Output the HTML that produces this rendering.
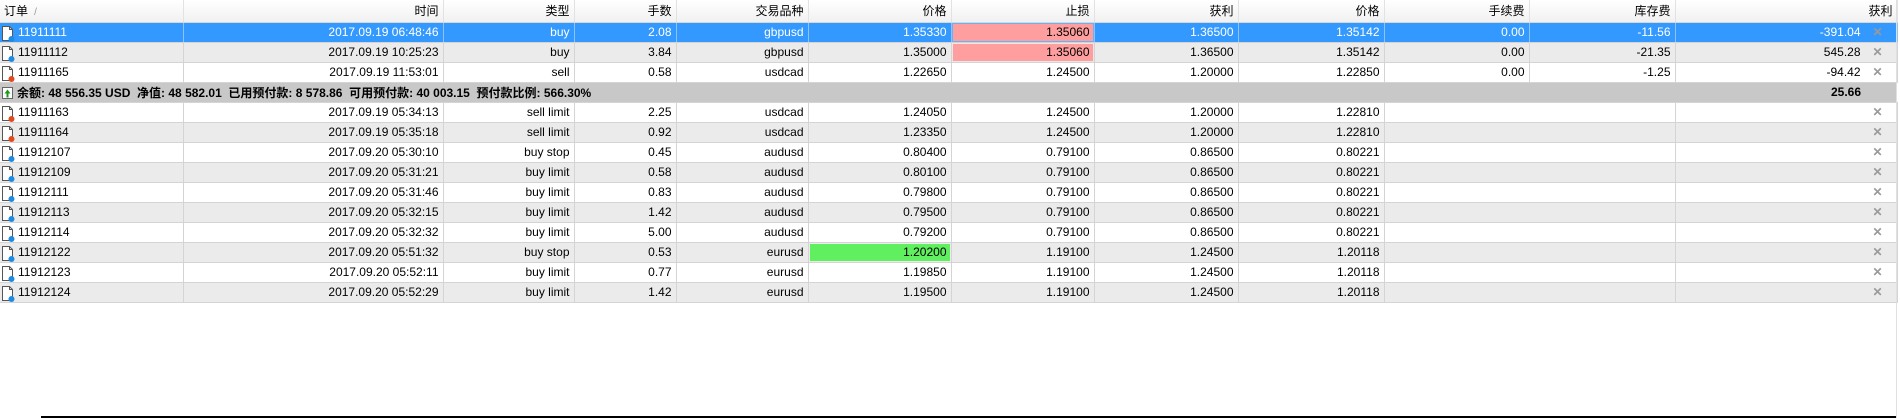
<!DOCTYPE html>
<html><head><meta charset="utf-8"><style>
body{margin:0;width:1900px;height:418px;background:#fff;overflow:hidden;position:relative;font-family:"Liberation Sans","Noto Sans CJK SC",sans-serif;font-size:12px;color:#000}
table{border-collapse:collapse;table-layout:fixed;width:1897px;position:absolute;left:0;top:0}
td,th{height:20px;padding:0 4px;border-bottom:1px solid #d4d4d4;border-right:1px solid #d4d4d4;text-align:right;white-space:nowrap;overflow:hidden;position:relative;box-sizing:border-box}
th{height:22px;font-weight:normal;background:linear-gradient(#fff,#f1f1f1);border-right:1px solid #e2e2e2;border-bottom:1px solid #d8d8d8}
th:first-child{text-align:left}
td.o{text-align:left;padding-left:18px}
tr.g td{background:#ebebeb}
tr.sel td{background:#3399ff;color:#fff;border-right-color:#8cc3f8}
tr.sum td{background:#c8c8c8;font-weight:bold;border-right:none}
td.nb{border-right:none}
tr td.pk{background:#ff9e9e!important;color:#000;box-shadow:inset 0 0 0 1px #e8e8e8}
tr.sel td.pk{box-shadow:inset 0 0 0 1px #6ab0f8}
tr td.gr{background:#5fef5f!important;box-shadow:inset 0 0 0 1px #ebebeb}
td.last{padding-right:36px}
.x{position:absolute;right:14px;top:2px;color:#999;font-size:12px;font-weight:bold}
.ic{position:absolute;left:1px;top:2px;width:14px;height:17px}
</style></head><body>
<svg width="0" height="0" style="position:absolute"><defs>
<g id="doc"><path d="M1.5 1.5h7l3 3v11h-10z" fill="#fff" stroke="#555"/><path d="M8.5 1.5v3h3" fill="none" stroke="#555"/></g>
</defs></svg>
<table>
<colgroup><col style="width:183px"><col style="width:260px"><col style="width:131px"><col style="width:102px"><col style="width:132px"><col style="width:143px"><col style="width:143px"><col style="width:144px"><col style="width:146px"><col style="width:145px"><col style="width:146px"><col style="width:222px"></colgroup>
<tr><th>订单 <span style="color:#999;font-size:10px">&nbsp;/</span></th><th>时间</th><th>类型</th><th>手数</th><th>交易品种</th><th>价格</th><th>止损</th><th>获利</th><th>价格</th><th>手续费</th><th>库存费</th><th style="padding-right:4px">获利</th></tr>
<tr class="sel"><td class="o"><svg class="ic"><use href="#doc"/><circle cx="10.5" cy="14" r="3" fill="#1e8be0"/></svg>11911111</td><td>2017.09.19 06:48:46</td><td>buy</td><td>2.08</td><td>gbpusd</td><td>1.35330</td><td class="pk">1.35060</td><td>1.36500</td><td>1.35142</td><td>0.00</td><td>-11.56</td><td class="last">-391.04<span class="x">✕</span></td></tr>
<tr class="g"><td class="o"><svg class="ic"><use href="#doc"/><circle cx="10.5" cy="14" r="3" fill="#1e8be0"/></svg>11911112</td><td>2017.09.19 10:25:23</td><td>buy</td><td>3.84</td><td>gbpusd</td><td>1.35000</td><td class="pk">1.35060</td><td>1.36500</td><td>1.35142</td><td>0.00</td><td>-21.35</td><td class="last">545.28<span class="x">✕</span></td></tr>
<tr><td class="o"><svg class="ic"><use href="#doc"/><circle cx="10.5" cy="14" r="3" fill="#e04a1e"/></svg>11911165</td><td>2017.09.19 11:53:01</td><td>sell</td><td>0.58</td><td>usdcad</td><td>1.22650</td><td>1.24500</td><td>1.20000</td><td>1.22850</td><td>0.00</td><td>-1.25</td><td class="last">-94.42<span class="x">✕</span></td></tr>
<tr class="sum"><td colspan="11" class="o" style="padding-left:17px"><svg class="ic" style="top:4px"><rect x="1.5" y="0.5" width="10" height="11" fill="#fff" stroke="#666"/><path d="M6.5 2.5l3 4h-2v4h-2v-4h-2z" fill="#1a9a1a"/></svg>余额: 48 556.35 USD&nbsp;&nbsp;净值: 48 582.01&nbsp;&nbsp;已用预付款: 8 578.86&nbsp;&nbsp;可用预付款: 40 003.15&nbsp;&nbsp;预付款比例: 566.30%</td><td class="last">25.66</td></tr>
<tr><td class="o"><svg class="ic"><use href="#doc"/><circle cx="10.5" cy="14" r="3" fill="#e04a1e"/></svg>11911163</td><td>2017.09.19 05:34:13</td><td>sell limit</td><td>2.25</td><td>usdcad</td><td>1.24050</td><td>1.24500</td><td>1.20000</td><td>1.22810</td><td class="nb"></td><td></td><td class="last"><span class="x">✕</span></td></tr>
<tr class="g"><td class="o"><svg class="ic"><use href="#doc"/><circle cx="10.5" cy="14" r="3" fill="#e04a1e"/></svg>11911164</td><td>2017.09.19 05:35:18</td><td>sell limit</td><td>0.92</td><td>usdcad</td><td>1.23350</td><td>1.24500</td><td>1.20000</td><td>1.22810</td><td class="nb"></td><td></td><td class="last"><span class="x">✕</span></td></tr>
<tr><td class="o"><svg class="ic"><use href="#doc"/><circle cx="10.5" cy="14" r="3" fill="#1e8be0"/></svg>11912107</td><td>2017.09.20 05:30:10</td><td>buy stop</td><td>0.45</td><td>audusd</td><td>0.80400</td><td>0.79100</td><td>0.86500</td><td>0.80221</td><td class="nb"></td><td></td><td class="last"><span class="x">✕</span></td></tr>
<tr class="g"><td class="o"><svg class="ic"><use href="#doc"/><circle cx="10.5" cy="14" r="3" fill="#1e8be0"/></svg>11912109</td><td>2017.09.20 05:31:21</td><td>buy limit</td><td>0.58</td><td>audusd</td><td>0.80100</td><td>0.79100</td><td>0.86500</td><td>0.80221</td><td class="nb"></td><td></td><td class="last"><span class="x">✕</span></td></tr>
<tr><td class="o"><svg class="ic"><use href="#doc"/><circle cx="10.5" cy="14" r="3" fill="#1e8be0"/></svg>11912111</td><td>2017.09.20 05:31:46</td><td>buy limit</td><td>0.83</td><td>audusd</td><td>0.79800</td><td>0.79100</td><td>0.86500</td><td>0.80221</td><td class="nb"></td><td></td><td class="last"><span class="x">✕</span></td></tr>
<tr class="g"><td class="o"><svg class="ic"><use href="#doc"/><circle cx="10.5" cy="14" r="3" fill="#1e8be0"/></svg>11912113</td><td>2017.09.20 05:32:15</td><td>buy limit</td><td>1.42</td><td>audusd</td><td>0.79500</td><td>0.79100</td><td>0.86500</td><td>0.80221</td><td class="nb"></td><td></td><td class="last"><span class="x">✕</span></td></tr>
<tr><td class="o"><svg class="ic"><use href="#doc"/><circle cx="10.5" cy="14" r="3" fill="#1e8be0"/></svg>11912114</td><td>2017.09.20 05:32:32</td><td>buy limit</td><td>5.00</td><td>audusd</td><td>0.79200</td><td>0.79100</td><td>0.86500</td><td>0.80221</td><td class="nb"></td><td></td><td class="last"><span class="x">✕</span></td></tr>
<tr class="g"><td class="o"><svg class="ic"><use href="#doc"/><circle cx="10.5" cy="14" r="3" fill="#1e8be0"/></svg>11912122</td><td>2017.09.20 05:51:32</td><td>buy stop</td><td>0.53</td><td>eurusd</td><td class="gr">1.20200</td><td>1.19100</td><td>1.24500</td><td>1.20118</td><td class="nb"></td><td></td><td class="last"><span class="x">✕</span></td></tr>
<tr><td class="o"><svg class="ic"><use href="#doc"/><circle cx="10.5" cy="14" r="3" fill="#1e8be0"/></svg>11912123</td><td>2017.09.20 05:52:11</td><td>buy limit</td><td>0.77</td><td>eurusd</td><td>1.19850</td><td>1.19100</td><td>1.24500</td><td>1.20118</td><td class="nb"></td><td></td><td class="last"><span class="x">✕</span></td></tr>
<tr class="g"><td class="o"><svg class="ic"><use href="#doc"/><circle cx="10.5" cy="14" r="3" fill="#1e8be0"/></svg>11912124</td><td>2017.09.20 05:52:29</td><td>buy limit</td><td>1.42</td><td>eurusd</td><td>1.19500</td><td>1.19100</td><td>1.24500</td><td>1.20118</td><td class="nb"></td><td></td><td class="last"><span class="x">✕</span></td></tr>
</table>
<div style="position:absolute;left:1896px;top:0;width:1px;height:418px;background:#e0e0e0"></div>
<div style="position:absolute;left:41px;top:416px;width:1855px;height:2px;background:#000"></div>
</body></html>
